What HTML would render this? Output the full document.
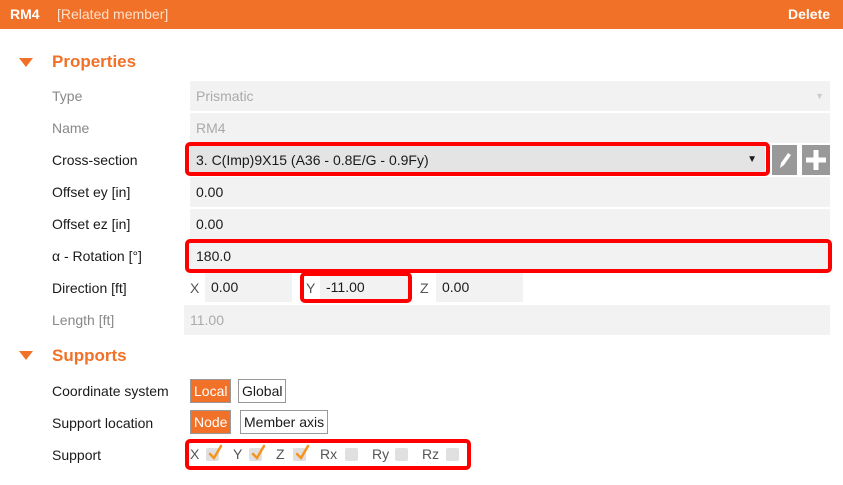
<!DOCTYPE html>
<html><head><style>
*{margin:0;padding:0;box-sizing:border-box}
body{width:843px;height:485px;background:#fff;font-family:"Liberation Sans",sans-serif;font-size:14px;color:#1a1a1a;position:relative;overflow:hidden}
.a{position:absolute}
.hdr{left:0;top:0;width:843px;height:29px;background:#f07127;color:#fff}
.lbl{left:52px;line-height:20px}
.box{background:#f2f2f2;height:30px;line-height:30px;padding-left:6px}
.red{border:4px solid #f00;border-radius:5px}
.h2{color:#f07127;font-weight:bold;font-size:17px}
.tri{width:0;height:0;border-left:7px solid transparent;border-right:7px solid transparent;border-top:9px solid #f07127}
.btn{height:24px;line-height:22px;border:1px solid #999;padding:0 3px;font-size:14px}
.on{background:#f07127;color:#fff}
.cb{width:13px;height:13px;background:#e0e0e0;border-radius:2px}
</style></head><body>
<div class="a hdr"><span class="a" style="left:10px;top:6px;font-weight:bold">RM4</span><span class="a" style="left:57px;top:6px;color:#fde0cc">[Related member]</span><span class="a" style="left:788px;top:6px;font-weight:bold">Delete</span></div>
<div class="a tri" style="left:19px;top:58px"></div><div class="a h2" style="left:52px;top:52px">Properties</div>
<div class="a lbl" style="top:86px;color:#888">Type</div><div class="a box" style="left:190px;top:81px;width:640px;color:#aaa">Prismatic<span class="a" style="right:6px;top:0;font-size:9px;color:#ccc">▼</span></div>
<div class="a lbl" style="top:118px;color:#888">Name</div><div class="a box" style="left:190px;top:113px;width:640px;color:#aaa">RM4</div>
<div class="a lbl" style="top:150px">Cross-section</div><div class="a box" style="left:190px;top:145px;width:575px;background:#e4e4e4">3. C(Imp)9X15 (A36 - 0.8E/G - 0.9Fy)<span class="a" style="right:8px;top:0;font-size:10px">▼</span></div>
<div class="a red" style="left:185px;top:142px;width:585px;height:34px"></div>
<div class="a" style="left:772px;top:145px;width:25px;height:30px;background:#999"><svg width="25" height="30"><path d="M8 23 L9 18 L16 8 L19 10 L12 20 Z" fill="#fff"/></svg></div>
<div class="a" style="left:802px;top:145px;width:28px;height:30px;background:#999"><svg width="28" height="30"><path d="M11.5 5h5v7.5h7.5v5h-7.5v7.5h-5v-7.5h-7.5v-5h7.5z" fill="#fff"/></svg></div>
<div class="a lbl" style="top:182px">Offset ey [in]</div><div class="a box" style="left:190px;top:177px;width:640px">0.00</div>
<div class="a lbl" style="top:214px">Offset ez [in]</div><div class="a box" style="left:190px;top:209px;width:640px">0.00</div>
<div class="a lbl" style="top:246px">α - Rotation [°]</div><div class="a box" style="left:190px;top:241px;width:640px">180.0</div>
<div class="a red" style="left:185px;top:239px;width:647px;height:34px"></div>
<div class="a lbl" style="top:278px">Direction [ft]</div>
<div class="a" style="left:190px;top:280px;color:#555">X</div><div class="a box" style="left:205px;top:273px;width:87px;height:29px;line-height:29px">0.00</div>
<div class="a" style="left:306px;top:280px;color:#555">Y</div><div class="a box" style="left:320px;top:273px;width:88px;height:29px;line-height:29px">-11.00</div>
<div class="a red" style="left:300px;top:272px;width:112px;height:31px"></div>
<div class="a" style="left:420px;top:280px;color:#555">Z</div><div class="a box" style="left:436px;top:273px;width:87px;height:29px;line-height:29px">0.00</div>
<div class="a lbl" style="top:310px;color:#888">Length [ft]</div><div class="a box" style="left:184px;top:305px;width:646px;color:#aaa">11.00</div>
<div class="a tri" style="left:19px;top:351px"></div><div class="a h2" style="left:52px;top:346px">Supports</div>
<div class="a lbl" style="top:381px">Coordinate system</div>
<div class="a btn on" style="left:190px;top:379px">Local</div><div class="a btn" style="left:238px;top:379px">Global</div>
<div class="a lbl" style="top:413px">Support location</div>
<div class="a btn on" style="left:190px;top:410px">Node</div><div class="a btn" style="left:240px;top:410px">Member axis</div>
<div class="a lbl" style="top:445px">Support</div>
<div class="a red" style="left:185px;top:439px;width:286px;height:31px"></div>
<svg class="a" style="left:0;top:0" width="843" height="485"><g stroke="#f7941d" stroke-width="2.5" fill="none" stroke-linecap="round"><path d="M210 454 L214 458 L221 446"/><path d="M253 454 L257 458 L264 446"/><path d="M297 454 L301 458 L308 446"/></g></svg>
<div class="a" style="left:190px;top:446px;color:#555">X</div><div class="a cb" style="left:206px;top:448px;z-index:-1"></div>
<div class="a" style="left:233px;top:446px;color:#555">Y</div><div class="a cb" style="left:249px;top:448px;z-index:-1"></div>
<div class="a" style="left:276px;top:446px;color:#555">Z</div><div class="a cb" style="left:293px;top:448px;z-index:-1"></div>
<div class="a" style="left:320px;top:446px;color:#555">Rx</div><div class="a cb" style="left:345px;top:448px"></div>
<div class="a" style="left:372px;top:446px;color:#555">Ry</div><div class="a cb" style="left:395px;top:448px"></div>
<div class="a" style="left:422px;top:446px;color:#555">Rz</div><div class="a cb" style="left:446px;top:448px"></div>
</body></html>
